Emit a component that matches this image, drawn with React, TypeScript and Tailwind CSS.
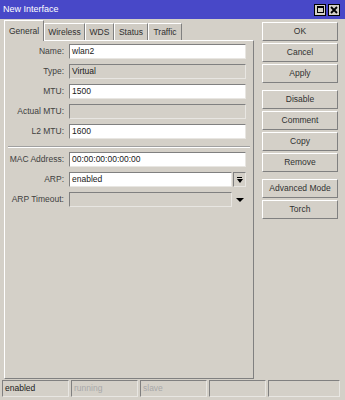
import React from "react";

type FieldProps = {
  label: string;
  value?: string;
  disabled?: boolean;
  extra?: "dropdown" | "arrow";
};

const sunken =
  "border border-t-[#808080] border-l-[#808080] border-b-[#e8e6e2] border-r-[#e8e6e2]";
const raised =
  "border border-t-white border-l-white border-b-[#808080] border-r-[#808080]";

const Field = ({ label, value, disabled, extra }: FieldProps) => {
  const width = extra ? "w-[163px]" : "w-[177px]";
  return (
    <div className="flex items-center h-[15px]">
      <div className="w-[59px] text-right text-[#404040] whitespace-nowrap">{label}</div>
      <div
        className={`ml-[5px] h-[15px] ${width} ${sunken} ${
          disabled ? "bg-[#d4d0c8]" : "bg-white"
        } flex items-center pl-[2px] text-[#202020] whitespace-nowrap overflow-hidden`}
      >
        {value}
      </div>
      {extra === "dropdown" && (
        <div
          className={`ml-[1px] w-[13px] h-[15px] ${sunken} bg-[#d4d0c8] flex flex-col items-center justify-center`}
        >
          <div className="w-[5px] h-px bg-black" />
          <div className="w-0 h-0 border-l-[3px] border-r-[3px] border-t-[4px] border-l-transparent border-r-transparent border-t-black mt-[1px]" />
        </div>
      )}
      {extra === "arrow" && (
        <div className="ml-[1px] w-[13px] h-[15px] flex items-center justify-center">
          <div className="w-0 h-0 border-l-[4px] border-r-[4px] border-t-[4px] border-l-transparent border-r-transparent border-t-black" />
        </div>
      )}
    </div>
  );
};

const Button = ({ label }: { label: string }) => (
  <div
    className={`h-[19px] w-[76px] ${raised} flex items-center justify-center text-[#303030]`}
  >
    {label}
  </div>
);

const tabs = ["Wireless", "WDS", "Status", "Traffic"];
const tabWidths = ["w-[41px]", "w-[29px]", "w-[34px]", "w-[34px]"];

const statusCells = [
  { text: "enabled", w: "w-[67px]", color: "text-[#202020]" },
  { text: "running", w: "w-[67px]", color: "text-[#a8a8a8]" },
  { text: "slave", w: "w-[67px]", color: "text-[#a8a8a8]" },
  { text: "", w: "w-[57px]", color: "" },
  { text: "", w: "w-[72px]", color: "" },
];

export default function App() {
  return (
    <div className="w-[345px] h-[400px] bg-[#d4d0c8] flex flex-col overflow-hidden font-['Liberation_Sans',Arial,sans-serif] text-[8.5px] leading-none">
      <div className="h-[19px] bg-[#4848c8] flex items-center pl-[3px] pr-[5px] text-white text-[9px]">
        <span>New Interface</span>
        <div className="ml-auto flex gap-[2px]">
          <div className="w-[12px] h-[12px] bg-[#d4d0c8] border border-black flex items-center justify-center">
            <div className="w-[7px] h-[7px] border border-black border-t-2" />
          </div>
          <div className="w-[12px] h-[12px] bg-[#d4d0c8] border border-black flex items-center justify-center">
            <svg width="8" height="8" viewBox="0 0 8 8">
              <path d="M1 1 L7 7 M7 1 L1 7" stroke="black" strokeWidth="1.8" />
            </svg>
          </div>
        </div>
      </div>

      <div className="flex flex-1">
        <div className="pl-[4px] w-[254px] flex flex-col pt-px">
          <div className="flex items-end h-[20px]">
            <div className="relative z-10 -mb-px h-[21px] w-[40px] bg-[#d4d0c8] border border-b-0 border-t-white border-l-white border-r-[#808080] flex items-center justify-center text-[#303030]">
              General
            </div>
            {tabs.map((t, i) => (
              <div
                key={t}
                className={`h-[17px] ${tabWidths[i]} bg-[#d0ccc4] border border-b-0 border-t-white border-l-white border-r-[#808080] flex items-center justify-center text-[#303030]`}
              >
                {t}
              </div>
            ))}
          </div>
          <div className={`flex-1 ${raised} pt-[3px] flex flex-col`}>
            <div className="flex flex-col gap-[5px]">
              <Field label="Name:" value="wlan2" />
              <Field label="Type:" value="Virtual" disabled />
              <Field label="MTU:" value="1500" />
              <Field label="Actual MTU:" disabled />
              <Field label="L2 MTU:" value="1600" />
            </div>
            <div className="mt-[7px] mx-[3px] h-[2px] border-t border-t-[#a0a0a0] border-b border-b-white" />
            <div className="mt-[4px] flex flex-col gap-[5px]">
              <Field label="MAC Address:" value="00:00:00:00:00:00" />
              <Field label="ARP:" value="enabled" extra="dropdown" />
              <Field label="ARP Timeout:" disabled extra="arrow" />
            </div>
          </div>
        </div>

        <div className="ml-[8px] pt-[3px] flex flex-col">
          <div className="flex flex-col gap-[2px]">
            <Button label="OK" />
            <Button label="Cancel" />
            <Button label="Apply" />
          </div>
          <div className="mt-[7px] flex flex-col gap-[2px]">
            <Button label="Disable" />
            <Button label="Comment" />
            <Button label="Copy" />
            <Button label="Remove" />
          </div>
          <div className="mt-[7px] flex flex-col gap-[2px]">
            <Button label="Advanced Mode" />
            <Button label="Torch" />
          </div>
        </div>
      </div>

      <div className="mt-px mb-[3px] h-[17px] px-[2px] flex gap-[2px]">
        {statusCells.map((c, i) => (
          <div
            key={i}
            className={`${c.w} h-[17px] ${sunken} flex items-center pl-[2px] ${c.color}`}
          >
            {c.text}
          </div>
        ))}
      </div>
    </div>
  );
}
